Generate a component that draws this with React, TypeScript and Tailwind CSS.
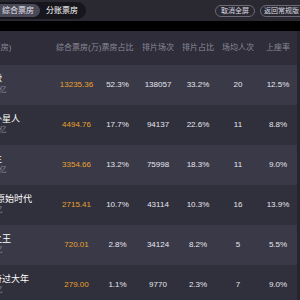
import { useEffect, useRef } from 'react';

const rows = [
  { name: '流浪地球', total: '累计 46.55亿', box: '13235.36', share: '52.3%', shows: '138057', showShare: '33.2%', avg: '20', rate: '12.5%' },
  { name: '疯狂的外星人', total: '累计 20.13亿', box: '4494.76', share: '17.7%', shows: '94137', showShare: '22.6%', avg: '11', rate: '8.8%' },
  { name: '飞驰人生', total: '累计 14.95亿', box: '3354.66', share: '13.2%', shows: '75998', showShare: '18.3%', avg: '11', rate: '9.0%' },
  { name: '熊出没·原始时代', total: '累计 5.81亿', box: '2715.41', share: '10.7%', shows: '43114', showShare: '10.3%', avg: '16', rate: '13.9%' },
  { name: '新喜剧之王', total: '累计 5.92亿', box: '720.01', share: '2.8%', shows: '34124', showShare: '8.2%', avg: '5', rate: '5.5%' },
  { name: '小猪佩奇过大年', total: '累计 1.17亿', box: '279.00', share: '1.1%', shows: '9770', showShare: '2.3%', avg: '7', rate: '9.0%' },
];

const cols = ['综合票房(万)', '票房占比', '排片场次', '排片占比', '场均人次', '上座率'];
const widths = ['w-[41px]', 'w-[41px]', 'w-[40px]', 'w-[40px]', 'w-[40px]', 'w-[40px]'];

export default function App() {
  const scrollRef = useRef<HTMLDivElement>(null);

  // table is scrolled a bit to the right, name column partly hidden
  useEffect(() => {
    if (scrollRef.current) scrollRef.current.scrollLeft = 44;
  }, []);

  return (
    <div className="w-[300px] h-[300px] overflow-hidden bg-[#2f2e3a] font-['Liberation_Sans','Noto_Sans_CJK_SC',sans-serif]">
      {/* top bar */}
      <div className="h-[21px] bg-[#2a2931] flex items-center justify-between overflow-hidden">
        <div className="flex items-center h-[17px] w-[86px] rounded-r-full bg-[#17161c] shrink-0">
          <span className="h-[13px] w-[40px] flex items-center pl-[2px] rounded-r-full bg-[#4a4957] text-[8px] leading-none text-[#e4e4ec]">
            综合票房
          </span>
          <span className="ml-[6px] text-[8px] leading-none text-white">分账票房</span>
        </div>
        <div className="flex items-center gap-[5px] whitespace-nowrap shrink-0 -mr-[14px]">
          <button className="h-[12px] px-[5px] rounded-full border border-[#6a6975] text-[7px] leading-none text-[#dcdce4]">
            取消全屏
          </button>
          <button className="h-[12px] pl-[3px] pr-[5px] rounded-full border border-[#6a6975] text-[7px] leading-none text-[#dcdce4] flex items-center gap-[2px]">
            返回常规版 <span>→</span>
          </button>
        </div>
      </div>
      <div className="h-[10px] bg-black" />

      <div className="flex">
        <div ref={scrollRef} className="w-[297px] overflow-hidden">
          <div className="w-[342px]">
            {/* header */}
            <div className="h-[34px] flex items-center bg-[#2e2d39] text-[8px] text-[#8c8b9b] whitespace-nowrap">
              <div className="w-[100px] pl-[10px]">影片(总票房)</div>
              {cols.map((c, i) => (
                <div key={c} className={`${widths[i]} text-center`}>
                  {c}
                </div>
              ))}
            </div>
            {rows.map((r, i) => (
              <div
                key={r.name}
                className={`h-[40px] flex items-center text-[8px] text-[#e6e6ee] whitespace-nowrap ${i % 2 === 0 ? 'bg-[#3a3948]' : 'bg-[#302f3c]'}`}
              >
                <div className="w-[100px] pl-[10px] flex flex-col -mt-[3px]">
                  <span className="text-[9px] leading-[11px] text-white">{r.name}</span>
                  <span className="text-[7px] leading-[9px] text-[#8c8b9b]">{r.total}</span>
                </div>
                <div className={`${widths[0]} text-center text-[#e9a22c]`}>{r.box}</div>
                <div className={`${widths[1]} text-center`}>{r.share}</div>
                <div className={`${widths[2]} text-center`}>{r.shows}</div>
                <div className={`${widths[3]} text-center`}>{r.showShare}</div>
                <div className={`${widths[4]} text-center`}>{r.avg}</div>
                <div className={`${widths[5]} text-center`}>{r.rate}</div>
              </div>
            ))}
          </div>
        </div>
        <div className="w-[3px] bg-[#26252d]" />
      </div>
    </div>
  );
}
